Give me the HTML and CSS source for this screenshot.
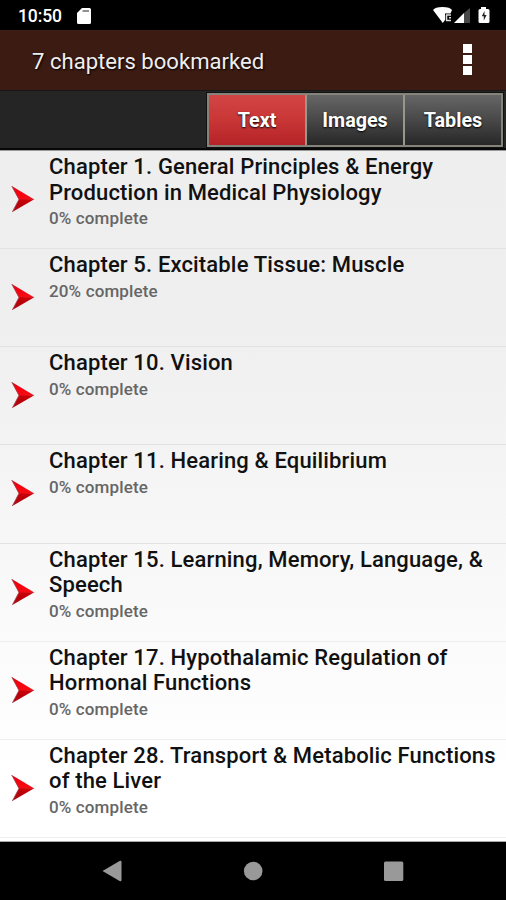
FILE: index.html
```html
<!DOCTYPE html>
<html lang="en">
<head>
<meta charset="utf-8">
<title>Bookmarks</title>
<link rel="stylesheet" href="styles.css">
</head>
<body>
<svg class="defs" aria-hidden="true">
  <defs>
    <linearGradient id="top" x1="0" y1="0" x2="0.4" y2="1"><stop offset="0" stop-color="#c80d18"/><stop offset=".5" stop-color="#fa0010"/><stop offset="1" stop-color="#f50b12"/></linearGradient>
    <linearGradient id="bottom" x1="0" y1="0" x2="0" y2="1"><stop offset="0" stop-color="#d00008"/><stop offset=".4" stop-color="#b90008"/><stop offset="1" stop-color="#a8101a"/></linearGradient>
    <symbol id="arrow" viewBox="0 0 24 28">
      <path d="M.7 1 23.3 14.400 8 15z" fill="url(#top)"/>
      <path d="M8 14.300H23.300L1.300 27z" fill="url(#bottom)"/>
      <path d="M.7 1 8 14.300 1.300 27" fill="none" stroke="#96454a" stroke-width=".7"/>
    </symbol>
  </defs>
</svg>
<div class="screen">
  <header class="status">
    <span class="clock">10:50</span>
    <svg class="sd" viewBox="0 0 14 16"><path d="M5 0h7.500Q14 0 14 1.500V14.500Q14 16 12.500 16H1.500Q0 16 0 14.500V5z" fill="#fff"/><path d="M5.500 3h6.500" stroke="#777" stroke-width="1.600"/></svg>
    <svg class="signals" viewBox="0 0 60 20">
      <path d="M1 4Q3 1 10.500 1T20 4L18.500 7.500H13v6.500L10.800 17z" fill="#fff"/>
      <path d="M14 9h5M14.500 9v5.500M14 14.500h5M17 11.800h2" fill="none" stroke="#ddd" stroke-width="1.600"/>
      <path d="M22 17 32 7V17z" fill="#fff"/><path d="M32 7 38 2V17H32z" fill="#484848"/>
      <path d="M49 1h5v2h2q1.500 0 1.500 1.500v11q0 1.500-1.500 1.500h-8q-1.500 0-1.500-1.500v-11q0-1.500 1.500-1.500h1z" fill="#fff"/>
      <path d="M52.500 5 49.800 10.300h2V14.500l2.800-5.500h-2.100z" fill="#222"/>
    </svg>
  </header>
  <div class="titlebar">
    <h1>7 chapters bookmarked</h1>
    <div class="menu"><i></i><i></i><i></i></div>
  </div>
  <nav class="tabs">
    <div class="group"><span class="tab active">Text</span><span class="tab">Images</span><span class="tab">Tables</span></div>
  </nav>
  <main class="list">
    <article class="row"><svg class="arrow"><use href="#arrow"/></svg><div><h2>Chapter 1. General Principles &amp; Energy<br>Production in Medical Physiology</h2><p>0% complete</p></div></article>
    <article class="row"><svg class="arrow"><use href="#arrow"/></svg><div><h2>Chapter 5. Excitable Tissue: Muscle</h2><p>20% complete</p></div></article>
    <article class="row"><svg class="arrow"><use href="#arrow"/></svg><div><h2>Chapter 10. Vision</h2><p>0% complete</p></div></article>
    <article class="row"><svg class="arrow"><use href="#arrow"/></svg><div><h2>Chapter 11. Hearing &amp; Equilibrium</h2><p>0% complete</p></div></article>
    <article class="row"><svg class="arrow"><use href="#arrow"/></svg><div><h2>Chapter 15. Learning, Memory, Language, &amp;<br>Speech</h2><p>0% complete</p></div></article>
    <article class="row"><svg class="arrow"><use href="#arrow"/></svg><div><h2>Chapter 17. Hypothalamic Regulation of<br>Hormonal Functions</h2><p>0% complete</p></div></article>
    <article class="row"><svg class="arrow"><use href="#arrow"/></svg><div><h2>Chapter 28. Transport &amp; Metabolic Functions<br>of the Liver</h2><p>0% complete</p></div></article>
  </main>
  <footer class="navbar">
    <svg viewBox="0 0 20 22"><path d="M.5 11 18 .8Q19.500.3 19.500 2V20Q19.500 21.700 18 21.200z"/></svg>
    <svg viewBox="0 0 20 22"><circle cx="10.200" cy="11" r="9.300"/></svg>
    <svg viewBox="0 0 20 22"><rect x="0" y="1.500" width="19.300" height="19.500" rx="1.500"/></svg>
  </footer>
</div>
</body>
</html>
```
FILE: styles.css
```css
* { box-sizing: border-box; }
body { margin: 0; font-family: Roboto, "Liberation Sans", sans-serif; }
h1, h2, p { margin: 0; white-space: nowrap; }
.defs { position: absolute; width: 0; height: 0; }
.screen { width: 506px; height: 900px; display: flex; flex-direction: column; overflow: hidden; background: #000; }
.status { height: 30px; display: flex; align-items: center; padding: 2px 11px 0 18px; color: #fff; }
.clock { font-size: 17.500px; font-weight: 500; line-height: 28px; width: 59px; letter-spacing: -.1px; }
.sd { width: 14px; height: 16px; }
.signals { width: 60px; height: 20px; margin-left: auto; margin-right: 3px; }
.titlebar { height: 60px; background: #3c1b12; display: flex; align-items: center; justify-content: space-between; padding: 0 34px 0 32px; color: #f0eeed; }
.titlebar h1 { font-size: 22.100px; font-weight: 400; padding-top: 1px; text-shadow: 1px 1px 2px #000; }
.menu { display: flex; flex-direction: column; gap: 2px; margin-top: -1px; }
.menu i { display: block; width: 9px; height: 9px; background: #fff; }
.tabs { height: 60px; background: #252525; border-top: 1px solid #171717; border-bottom: 2px solid #080808; display: flex; justify-content: flex-end; padding: 2px 3px 1px 0; }
.group { display: flex; width: 296px; height: 54px; border: 2px solid #85837a; outline: 1px solid #111; }
.tab { flex: 1; display: flex; align-items: center; justify-content: center; padding-top: 1px; color: #fff; font-size: 19.700px; font-weight: 700; background: linear-gradient(#666, #484848 50%, #272727); text-shadow: 0 1px 2px #000; }
.tab + .tab { border-left: 2px solid #99978a; }
.tab.active { background: linear-gradient(#d34545, #c93636 50%, #b52328); }
.list { height: 692px; border-top: 1px solid #999; border-bottom: 1px solid #aaa; background: linear-gradient(#eee, #efefef 25%, #f8f8f8 60%, #fff 90%); }
.row { height: 98.150px; border-bottom: 1px solid #e2e2e2; display: flex; padding: 3px 0 0 11px; }
.row:nth-child(n+5) { border-color: #eee; }
.arrow { width: 24px; height: 28px; margin: 31px 14px 0 0; flex: none; }
.row h2 { color: #111; font-size: 22px; font-weight: 500; line-height: 25.500px; letter-spacing: .15px; }
.row p { color: #666; font-size: 17px; font-weight: 500; line-height: 20px; margin-top: 3px; letter-spacing: .14px; }
.navbar { height: 58px; display: flex; justify-content: space-between; padding: 18px 102px 0; }
.navbar svg { width: 20px; height: 22px; fill: #999; }
```
